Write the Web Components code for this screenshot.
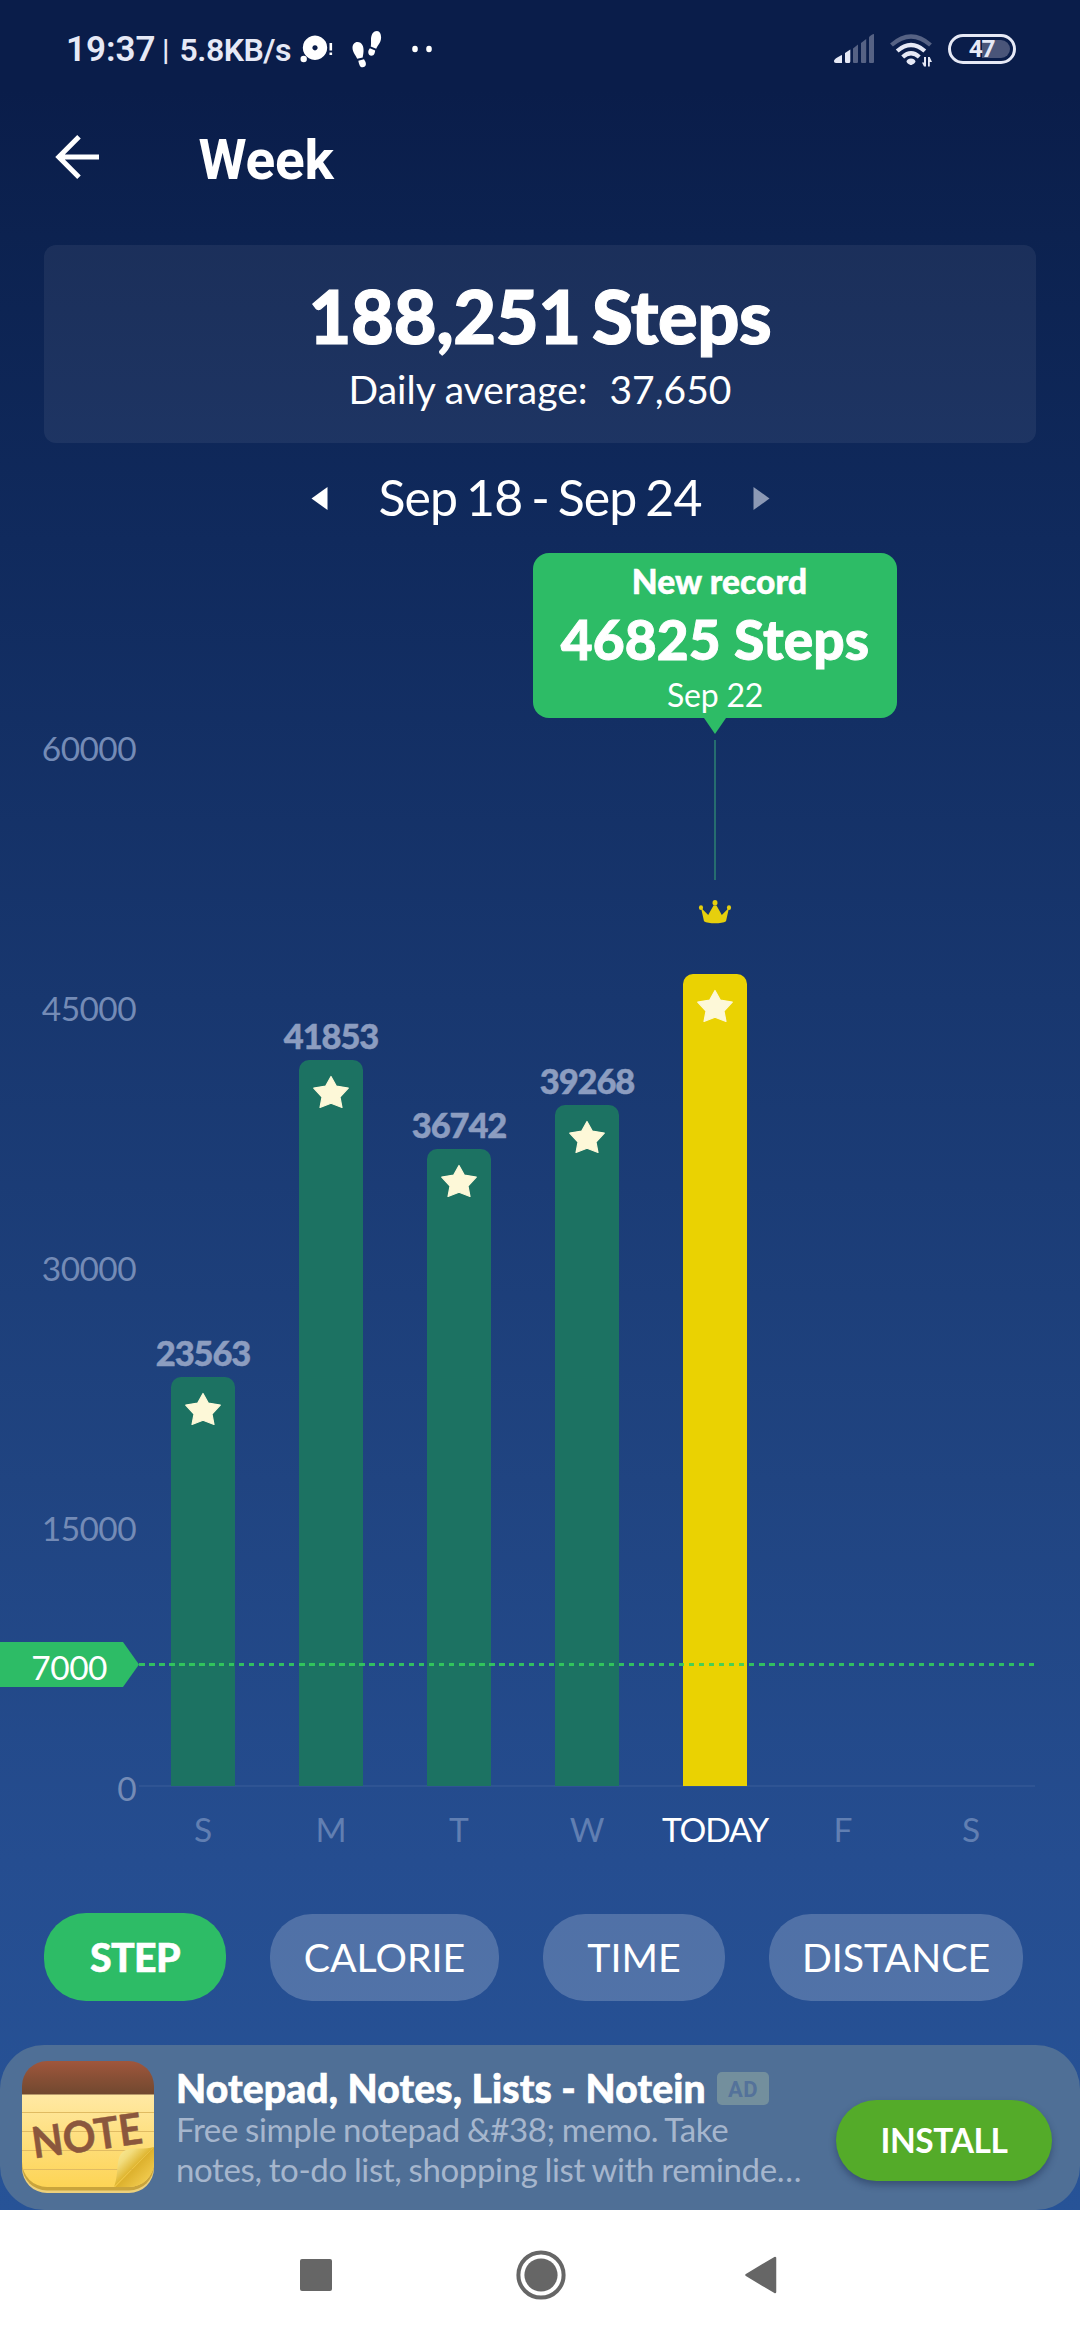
<!DOCTYPE html>
<html lang="en">
<head>
<meta charset="utf-8">
<title>Week</title>
<style>
html, body { margin: 0; padding: 0; }
body { width: 1080px; height: 2340px; overflow: hidden; background: #0a1d4a; font-family: Lato, "Open Sans", sans-serif; color: #fff; }
</style>
</head>
<body>
<week-screen></week-screen>
<script>
const define = (name, html, setup) => {
  const template = document.createElement('template');
  template.innerHTML = html;
  customElements.define(name, class extends HTMLElement {
    constructor() {
      super();
      this.attachShadow({ mode: 'open' }).append(template.content.cloneNode(true));
    }
    connectedCallback() { if (setup) setup(this, this.shadowRoot); }
  });
};

define('status-bar', `
<style>
:host { display: flex; height: 100px; box-sizing: border-box; padding: 0 64px 0 66px; font-family: Roboto, sans-serif; font-weight: 600; color: #e6e9f6; line-height: 100px; white-space: pre; }
.time { font-size: 35px; width: 96px; letter-spacing: 0; }
.sep { font-size: 30px; width: 17.5px; font-weight: 500; }
.rate { font-size: 32px; width: 118px; letter-spacing: -0.5px; }
svg { display: block; flex: none; }
.grow { flex: 1; }
.battery { box-sizing: border-box; width: 68px; height: 30px; margin: 34px 0 0 16px; border: 3px solid #e6e9f6; border-radius: 15px; display: grid; }
.battery > * { grid-area: 1 / 1; }
.fill { background: #4a5579; margin: 3px 3px 3px 31px; border-radius: 0 9px 9px 0; }
.pct { font-size: 24.5px; font-weight: 700; line-height: 24px; text-align: center; padding-right: 1px; letter-spacing: -1.2px; }
</style>
<span class="time">19:37</span><span class="sep">|</span><span class="rate">5.8KB/s</span>
<svg width="150" height="100" viewBox="297.500 0 150 100" fill="#fff">
  <path fill-rule="evenodd" d="M314.500 35.500a12.200 12.200 0 1 0 .01 0zM314.500 45.200a2.600 2.600 0 1 1-.01 0z"/>
  <circle cx="303.200" cy="59" r="3.200"/>
  <path d="M329 43h2.600v7.500h-2.600zM329 52.500h2.600v2.500h-2.600z"/>
  <path d="M357 42c4.500 0 6.500 4.500 6 9.500-.2 3-.6 4-.8 6l-5.500 1.300c-1-3-4.700-6.500-4.700-10.800 0-3.500 2-6 5-6zM357.800 60.700l5.700-1.500c1.200 2 2 3.300 1.900 5-.1 3.600-5.100 4-6.200 1.200-.7-1.600-1-3-1.400-4.700z"/>
  <path d="M376.500 31c-4.500 0-6 4.500-6 9 0 3.500.2 4.500-.3 6.500l5.500 2.300c1-3 4.800-5.800 4.900-11.300 0-3.500-1.300-6.500-4.100-6.500zM374.700 50.500l-5.300-2.200c-1 1.200-1.800 2.500-1.600 4.500.3 3.900 5.200 3.900 6.200.8.3-1 .5-1.800.7-3.100z"/>
  <ellipse cx="414.500" cy="49" rx="2.800" ry="3.200"/><ellipse cx="428.500" cy="49" rx="2.800" ry="3.200"/>
</svg>
<span class="grow"></span>
<svg width="100" height="100" viewBox="832 0 100 100">
  <g fill="#e6e9f6"><path d="M834 61c0-2 5-4.500 8-6v8h-6c-1.500 0-2-1-2-2zM845 53l5.300-3.500v12q0 1.500-1.500 1.500h-2.300q-1.500 0-1.500-1.500z"/></g>
  <g fill="#566284"><path d="M853 48.500l5-4V62q0 1-1 1h-3q-1 0-1-1zM861 43l5.200-4V62q0 1-1 1h-3.200q-1 0-1-1zM869 37.500q1-2.500 5-3.500v28q0 1-1 1h-3q-1 0-1-1z"/></g>
  <g fill="none" stroke-linecap="butt" stroke-width="4.300">
    <path stroke="#566284" d="M891.500 45q19.500-17 39 0"/>
    <path stroke="#e6e9f6" d="M897.200 51q13.800-12 27.600 0M902.700 57q8.300-7.500 16.600 0"/>
  </g>
  <path fill="#e6e9f6" d="M911 58.500c2.500 0 4.500 1.500 4.500 3 0 1.200-3 3.500-4.500 3.500s-4.500-2.300-4.500-3.500c0-1.500 2-3 4.500-3zM924 57h2v9.500h-2l-2-4h2zM928 57h1.700l2.300 5h-2.200v4.500H928z"/>
</svg>
<div class="battery"><i class="fill"></i><span class="pct">47</span></div>
`);

define('page-header', `
<style>
:host { display: flex; height: 145px; align-items: flex-start; padding-left: 54px; box-sizing: border-box; }
svg { margin-top: 33px; display: block; }
h1 { margin: 0 0 0 96.500px; font: 700 55px/100px Roboto, sans-serif; padding-top: 10px; letter-spacing: -0.2px; }
</style>
<svg width="48" height="48" viewBox="54 133 48 48" fill="none" stroke="#fff" stroke-width="5"><path d="M99 157H58.500M79 136.800L58.800 157L79 177.200"/></svg>
<h1><slot></slot></h1>
`);

define('summary-card', `
<style>
:host { display: flex; flex-direction: column; align-items: center; box-sizing: border-box; height: 198px; margin: 0 44px; border-radius: 12px; background: rgba(255,255,255,.063); white-space: pre; }
.total { font-size: 74px; font-weight: 900; line-height: 80px; margin-top: 31px; letter-spacing: -.4px; word-spacing: -6px; -webkit-text-stroke: 1.200px #fff; }
.avg { font-size: 39px; line-height: 50px; margin-top: 8px; }
.avg b { font-weight: 400; margin-left: 22px; }
</style>
<div class="total"><slot name="total"></slot></div>
<div class="avg"><slot name="label"></slot><b><slot name="average"></slot></b></div>
`);

define('date-range', `
<style>
:host { display: flex; height: 109px; align-items: flex-start; justify-content: center; font-size: 50px; line-height: 60px; }
span { margin-top: 24px; width: 325px; text-align: center; white-space: nowrap; margin-left: 50px; margin-right: 50px; letter-spacing: -.9px; word-spacing: -3px; }
svg { margin-top: 43.500px; display: block; }
</style>
<svg width="17" height="23"><path d="M16.500 0v23L.5 11.500z" fill="#fff"/></svg><span><slot></slot></span><svg width="17" height="23"><path d="M.5 0v23l16-11.500z" fill="#8c99b5"/></svg>
`);

define('record-tooltip', `
<style>
:host { display: flex; flex-direction: column; align-items: center; width: 364px; white-space: nowrap; }
.box { width: 364px; height: 164.500px; background: #2dbc66; border-radius: 16px; display: flex; flex-direction: column; align-items: center; }
.a { font-size: 33.500px; font-weight: 900; line-height: 40px; margin: 8px 0 0 9px; letter-spacing: .1px; -webkit-text-stroke: .5px #fff; }
.b { font-size: 55px; font-weight: 900; line-height: 60px; margin-top: 8px; letter-spacing: .1px; -webkit-text-stroke: .9px #fff; }
.c { font-size: 32px; line-height: 40px; margin-top: 5.500px; letter-spacing: -.2px; }
.line { width: 2px; height: 140px; margin-top: 6px; background: #266d6f; }
svg { display: block; }
.crown { margin-top: 20.500px; }
</style>
<div class="box"><div class="a"><slot name="title"></slot></div><div class="b"><slot name="value"></slot></div><div class="c"><slot name="date"></slot></div></div>
<svg width="22" height="16" viewBox="0 0 22 16"><path d="M0 0h22L11 16z" fill="#2dbc66"/></svg>
<i class="line"></i>
<svg class="crown" width="34" height="24" viewBox="0 0 34 22" preserveAspectRatio="none" fill="#e6cf0d"><circle cx="17" cy="2.600" r="2.500"/><circle cx="3" cy="7" r="2.100"/><circle cx="31" cy="7" r="2.100"/><path d="M3 7l7.200 6.800L15.500 5h3l5.300 8.800L31 7 28 19.500c-4 2.500-18 2.500-22 0z"/></svg>
`);

define('day-column', `
<style>
:host { display: flex; flex: 1 1 0; flex-direction: column; justify-content: flex-end; align-items: center; height: 100%; white-space: nowrap; }
.value { font-size: 34.500px; font-weight: 900; line-height: 40px; height: 40px; margin-bottom: 4px; color: #8c9dc0; letter-spacing: -1.1px; -webkit-text-stroke: .5px #8c9dc0; }
.bar { width: 64px; border-radius: 10px 10px 0 0; background: #1c7262; display: flex; justify-content: center; }
.bar svg { margin-top: 15px; display: block; }
.day { width: 128px; display: flex; justify-content: center; font-size: 33.500px; line-height: 40px; height: 40px; margin-top: 23px; color: #617fb2; }
:host([current]) .day { color: #fff; letter-spacing: -1.1px; }
:host([current]) .bar { background: #ead202; }
</style>
<div class="value"></div>
<div class="bar"><svg width="38" height="34" viewBox="0 0 38 34"><path d="M19 1.500l5.300 9.600 12 2-8.300 8.900 2 10.500L19 28.300 8 32.500 10 22 1.700 13.100l12-2z" fill="#fdf8d8" stroke="#fdf8d8" stroke-linejoin="round" stroke-width="1.200"/></svg></div>
<div class="day"><slot></slot></div>
`, (el, root) => {
  const bar = root.querySelector('.bar');
  root.querySelector('.value').textContent = el.getAttribute('value') || '';
  const h = +el.getAttribute('bar') || 0;
  if (h) bar.style.height = h + 'px'; else bar.remove();
});

define('goal-line', `
<style>
:host { display: flex; height: 45px; align-items: flex-start; }
.tag { width: 139px; height: 45px; box-sizing: border-box; background: #2dbc66; clip-path: polygon(0 0, 123px 0, 139px 22.500px, 123px 45px, 0 45px); padding-right: 32px; text-align: right; font-size: 33.500px; line-height: 50px; letter-spacing: -.5px; }
.dash { flex: 1; margin: 21px 45px 0 0; height: 3px; background: repeating-linear-gradient(90deg, rgba(52,208,92,.88) 0 5.500px, transparent 5.500px 10px); }
</style>
<div class="tag"><slot></slot></div><div class="dash"></div>
`);

define('step-chart', `
<style>
:host { display: flex; position: relative; height: 1318px; }
.axis { width: 136px; padding-top: 176px; margin-right: 3px; display: flex; flex-direction: column; gap: 220px; text-align: right; font-size: 33.500px; line-height: 40px; color: #748bb6; letter-spacing: -.6px; }
.plot { width: 896px; height: 1297px; display: flex; background: linear-gradient(#2f5493, #2f5493) 0 1232.500px / 896px 2px no-repeat; }
record-tooltip { position: absolute; left: 533px; top: 1px; }
goal-line { position: absolute; left: 0; right: 0; top: 1090px; }
</style>
<div class="axis"><span>60000</span><span>45000</span><span>30000</span><span>15000</span><span>0</span></div>
<div class="plot"><slot></slot></div>
<goal-line>7000</goal-line>
<record-tooltip><span slot="title">New record</span><span slot="value">46825 Steps</span><span slot="date">Sep 22</span></record-tooltip>
`);

define('metric-tab', `
<style>
:host { display: flex; justify-content: center; height: 87px; margin-top: 1px; border-radius: 42px; background: rgba(255,255,255,.2); font-size: 39.300px; line-height: 85.500px; white-space: nowrap; }
:host([selected]) { background: #2dbc66; font-weight: 900; height: 88px; margin-top: 0; line-height: 88px; letter-spacing: -.7px; -webkit-text-stroke: .5px #fff; }
</style>
<slot></slot>
`);

define('metric-tabs', `
<style>:host { display: grid; grid-template-columns: 182px 229px 182px 254px; gap: 44px; height: 132px; padding: 43px 57px 0 44px; box-sizing: content-box; align-items: start; }</style>
<slot></slot>
`);

define('note-icon', `
<style>:host { display: block; width: 132px; height: 132px; } svg { display: block; }</style>
<svg width="132" height="132" viewBox="0 0 132 132">
  <defs>
    <linearGradient id="head" x1="0" y1="0" x2="0" y2="1"><stop offset="0" stop-color="#a0563c"/><stop offset="1" stop-color="#6f482f"/></linearGradient>
    <linearGradient id="paper" x1="0" y1="0" x2="0" y2="1"><stop offset="0" stop-color="#ffe9a4"/><stop offset="1" stop-color="#fdd455"/></linearGradient>
    <linearGradient id="fold" x1="0" y1="0" x2="1" y2="1"><stop offset="0" stop-color="#fbf0a4"/><stop offset=".28" stop-color="#f2dc7c"/><stop offset=".5" stop-color="#dfb530"/></linearGradient>
    <linearGradient id="under" x1="0" y1="0" x2="1" y2="1"><stop offset=".5" stop-color="#dcb02c"/><stop offset="1" stop-color="#fbd75e"/></linearGradient>
    <clipPath id="shape"><rect width="132" height="126" rx="25"/></clipPath>
  </defs>
  <rect y="60" width="132" height="72" rx="25" fill="#ecd07c"/>
  <rect y="60" width="132" height="69.500" rx="25" fill="#c9a43c"/>
  <g clip-path="url(#shape)">
    <path d="M0 0h132v34H0z" fill="url(#head)"/>
    <path d="M0 33.500h132V126H0z" fill="url(#paper)"/>
    <path d="M0 51.500h132M0 70.500h132M0 89.500h132M0 108.500h132" stroke="#e0bb62" stroke-width="1"/>
    <path d="M132 86v40H93z" fill="url(#under)"/>
    <path d="M132 86C123 89 112 86 104 89C92 94 98 111 92 126z" fill="url(#fold)"/>
  </g>
  <text x="0" y="0" transform="translate(12 97.500) rotate(-8)" textLength="111" lengthAdjust="spacingAndGlyphs" font-family="Lato, sans-serif" font-weight="700" font-size="43" fill="#8b573d" stroke="#8b573d" stroke-width=".5" stroke-linejoin="round">NOTE</text>
</svg>
`);

define('ad-banner', `
<style>
:host { display: flex; height: 165px; box-sizing: border-box; border-radius: 44px; background: #4f6f96; padding-left: 22px; white-space: nowrap; }
note-icon { margin-top: 16px; }
.text { margin-left: 22px; width: 660px; display: flex; flex-direction: column; }
.row { display: flex; height: 50px; margin-top: 18px; }
.title { font-size: 39px; font-weight: 900; line-height: 51px; width: 541px; letter-spacing: .15px; -webkit-text-stroke: .6px #fff; }
.badge { width: 52px; height: 33px; margin-top: 9px; border-radius: 5px; background: #738f9d; color: #54729a; font: 700 22px/35px Roboto, sans-serif; text-align: center; letter-spacing: .5px; }
.desc { font-size: 33px; line-height: 40px; color: #a6b6cd; margin-top: -4px; white-space: pre; letter-spacing: -.36px; word-spacing: -1px; }
.cta { width: 216px; height: 81px; margin-top: 55px; border-radius: 40.500px; background: #54ab29; box-shadow: 0 4px 7px rgba(20,35,70,.4); font-size: 33.500px; font-weight: 700; line-height: 81px; text-align: center; letter-spacing: -.4px; }
</style>
<note-icon></note-icon>
<div class="text"><div class="row"><div class="title"><slot name="title"></slot></div><div class="badge">AD</div></div><div class="desc"><slot name="desc"></slot></div></div>
<div class="cta"><slot name="action"></slot></div>
`);

define('nav-bar', `
<style>:host { display: grid; grid-template-columns: 32px 50px 32px; column-gap: 183.500px; padding-left: 300px; height: 130px; background: #fff; align-items: center; } svg { display: block; }</style>
<svg width="32" height="32"><rect width="32" height="32" rx="2" fill="#666"/></svg>
<svg width="50" height="50"><circle cx="25" cy="25" r="22.600" fill="none" stroke="#666" stroke-width="4"/><circle cx="25" cy="25" r="16.600" fill="#666"/></svg>
<svg width="32" height="38" style="margin-left:-4.500px"><path d="M30 2v34L1.500 19z" fill="#666" stroke="#666" stroke-width="2.500" stroke-linejoin="round"/></svg>
`);

define('week-screen', `
<style>
:host { display: flex; flex-direction: column; width: 1080px; height: 2340px; background: linear-gradient(#0a1d4a 0, #0a1d4a 90px, #0c2250 235px, #102a5d 540px, #18376f 1000px, #204481 1480px, #254d90 1860px, #275397 2210px); }
nav-bar { box-sizing: border-box; }
</style>
<status-bar></status-bar>
<page-header>Week</page-header>
<summary-card><span slot="total">188,251 Steps</span><span slot="label">Daily average:</span><span slot="average">37,650</span></summary-card>
<date-range>Sep 18 - Sep 24</date-range>
<step-chart>
  <day-column value="23563" bar="409">S</day-column>
  <day-column value="41853" bar="726">M</day-column>
  <day-column value="36742" bar="637">T</day-column>
  <day-column value="39268" bar="681">W</day-column>
  <day-column bar="812" current>TODAY</day-column>
  <day-column>F</day-column>
  <day-column>S</day-column>
</step-chart>
<metric-tabs><metric-tab selected>STEP</metric-tab><metric-tab>CALORIE</metric-tab><metric-tab>TIME</metric-tab><metric-tab>DISTANCE</metric-tab></metric-tabs>
<ad-banner><span slot="title">Notepad, Notes, Lists - Notein</span><span slot="desc">Free simple notepad &amp;#38; memo. Take
notes, to-do list, shopping list with reminde…</span><span slot="action">INSTALL</span></ad-banner>
<nav-bar></nav-bar>
`);
</script>
</body>
</html>
